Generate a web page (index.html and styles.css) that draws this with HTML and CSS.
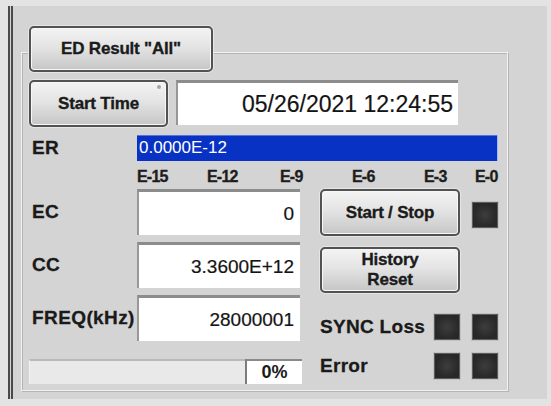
FILE: index.html
```html
<!DOCTYPE html>
<html>
<head>
<meta charset="utf-8">
<link rel="stylesheet" href="styles.css">
</head>
<body>
<div class="frame">
  <div class="btn tab-btn">ED Result "All"</div>
  <div class="group">
    <div class="row-time">
      <div class="btn time-btn">Start Time<span class="dot"></span></div>
      <div class="field date-field">05/26/2021 12:24:55</div>
    </div>
    <div class="row-er">
      <div class="label">ER</div>
      <div class="er-bar">0.0000E-12</div>
    </div>
    <div class="scale">
      <span>E-15</span><span>E-12</span><span>E-9</span><span>E-6</span><span>E-3</span><span>E-0</span>
    </div>
    <div class="bottom">
      <div class="left-col">
        <div class="frow"><div class="label">EC</div><div class="field num">0</div></div>
        <div class="frow"><div class="label">CC</div><div class="field num">3.3600E+12</div></div>
        <div class="frow"><div class="label">FREQ(kHz)</div><div class="field num">28000001</div></div>
        <div class="prow"><div class="progress"></div><div class="pct">0%</div></div>
      </div>
      <div class="right-col">
        <div class="ss-row">
          <div class="btn side-btn">Start / Stop</div>
          <div class="led led-top"></div>
        </div>
        <div class="btn side-btn reset-btn">History<br>Reset</div>
        <div class="ind-row sync-row">
          <div class="ind-label">SYNC Loss</div>
          <div class="led"></div>
          <div class="led"></div>
        </div>
        <div class="ind-row err-row">
          <div class="ind-label">Error</div>
          <div class="led"></div>
          <div class="led"></div>
        </div>
      </div>
    </div>
  </div>
</div>
</body>
</html>
```
FILE: styles.css
```css
html, body {
  margin: 0;
  padding: 0;
}
body {
  width: 551px;
  height: 406px;
  overflow: hidden;
  background: #e3e3e3;
  font-family: "Liberation Sans", Arial, sans-serif;
  color: #151515;
}
.frame {
  box-sizing: border-box;
  margin: 6px 4px 0 8px;
  width: 539px;
  height: 393px;
  background: #d4d4d4;
  border-left: 5px double #4a4a4a;
  padding: 20px 0 0 16px;
}
.btn {
  box-sizing: border-box;
  border: 2px solid #525252;
  border-radius: 5px;
  background: linear-gradient(#f3f3f3, #e4e4e4 45%, #c6c6c6);
  box-shadow: inset 0 0 0 1px #f7f7f7, 0 0 0 1px #e6e6e6;
  display: flex;
  align-items: center;
  justify-content: center;
  text-align: center;
  font-weight: bold;
  font-size: 17px;
  color: #1b1b1b;
  letter-spacing: -0.2px;
  -webkit-text-stroke: 0.35px #1b1b1b;
}
.tab-btn {
  position: relative;
  z-index: 1;
  width: 184px;
  height: 46px;
}
.group {
  box-sizing: border-box;
  margin: -20px 0 0 -8px;
  width: 487px;
  height: 339px;
  border: 1px solid #f2f2f2;
  box-shadow: 1px 1px 0 #b4b4b4, inset 1px 1px 0 #b4b4b4;
  padding: 27px 0 0 7px;
}
.row-time {
  display: flex;
  gap: 8px;
  height: 47px;
}
.time-btn {
  position: relative;
  width: 139px;
  height: 47px;
}
.dot {
  position: absolute;
  top: 3px;
  right: 5px;
  width: 4px;
  height: 4px;
  border-radius: 50%;
  background: #a4a4a4;
}
.field {
  box-sizing: border-box;
  background: #fff;
  border-top: 3px solid #8c8c8c;
  border-left: 2px solid #979797;
  display: flex;
  align-items: center;
  justify-content: flex-end;
  color: #141414;
  -webkit-text-stroke: 0.2px #141414;
}
.date-field {
  width: 282px;
  height: 45px;
  padding-right: 5px;
  font-size: 23px;
}
.row-er {
  display: flex;
  align-items: center;
  margin-top: 8px;
  height: 26px;
}
.label {
  box-sizing: border-box;
  width: 108px;
  padding-left: 3px;
  font-weight: bold;
  font-size: 19px;
  letter-spacing: 0.4px;
  color: #1a1a1a;
  white-space: nowrap;
  -webkit-text-stroke: 0.3px #1a1a1a;
}
.er-bar {
  box-sizing: border-box;
  width: 361px;
  height: 26px;
  background: #0832c4;
  border-right: 1px solid #9db6ff;
  box-shadow: inset 0 1px 0 #5473dc;
  color: #fff;
  font-size: 17px;
  padding-left: 2px;
  display: flex;
  align-items: center;
}
.scale {
  display: grid;
  grid-template-columns: 70px 73px 72px 72px 51px auto;
  padding-left: 108px;
  height: 28px;
  box-sizing: border-box;
  padding-top: 8px;
  font-weight: bold;
  font-size: 16px;
  line-height: 16px;
  letter-spacing: -0.8px;
  color: #1d1d1d;
  -webkit-text-stroke: 0.3px #1d1d1d;
}
.bottom {
  display: flex;
  gap: 20px;
}
.left-col {
  width: 271px;
  display: flex;
  flex-direction: column;
  gap: 7px;
}
.frow {
  display: flex;
  align-items: center;
  height: 46px;
}
.num {
  width: 163px;
  height: 46px;
  padding-right: 6px;
  font-size: 19px;
}
.prow {
  display: flex;
  margin-top: 11px;
  height: 25px;
  width: 273px;
}
.progress {
  box-sizing: border-box;
  width: 216px;
  height: 25px;
  background: #e9e9e9;
  border-top: 2px solid #b9b9b9;
  border-left: 1px solid #f3f3f3;
}
.pct {
  box-sizing: border-box;
  width: 57px;
  height: 25px;
  background: #fff;
  border-left: 2px solid #7c7c7c;
  border-top: 2px solid #8a8a8a;
  display: flex;
  align-items: center;
  justify-content: center;
  font-weight: bold;
  font-size: 18px;
  color: #1a1a1a;
}
.right-col {
  width: 178px;
  display: flex;
  flex-direction: column;
}
.ss-row {
  display: flex;
  gap: 12px;
}
.side-btn {
  width: 140px;
  height: 47px;
}
.led {
  box-sizing: border-box;
  flex: none;
  width: 26px;
  height: 26px;
  border: 1px solid #5c5c5c;
  background: radial-gradient(circle, #3d3d3d, #282828 70%);
  box-shadow: 0 0 0 1px #c2c2c2;
}
.led-top {
  margin-top: 13px;
}
.reset-btn {
  margin-top: 11px;
  height: 46px;
  line-height: 20px;
}
.ind-row {
  display: flex;
  align-items: center;
  height: 26px;
}
.ind-row .led + .led {
  margin-left: 12px;
}
.sync-row {
  margin-top: 21px;
}
.err-row {
  margin-top: 13px;
}
.ind-label {
  width: 114px;
  flex: none;
  white-space: nowrap;
  font-weight: bold;
  font-size: 19px;
  letter-spacing: 0.3px;
  color: #1a1a1a;
  -webkit-text-stroke: 0.3px #1a1a1a;
}
```
